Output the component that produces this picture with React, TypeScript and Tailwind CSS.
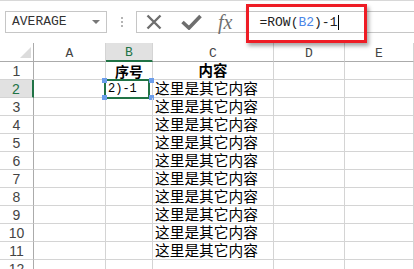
import React from "react";

const mono = { fontFamily: '"Liberation Mono", "DejaVu Sans Mono", monospace' };
const cjk = { fontFamily: '"Noto Sans CJK SC", "Noto Sans", sans-serif' };

const rows = Array.from({ length: 12 }, (_, i) => i + 1);

export default function App() {
  return (
    <div className="relative w-[414px] h-[269px] overflow-hidden bg-white">
      {/* Formula bar */}
      <div className="h-[43px] border-t border-[#d8d8d8] flex items-center pb-[1px]">
        <div className="ml-[5px] w-[102px] h-[22px] border border-[#c6c6c6] flex items-center justify-between pl-[6px] pr-[6px]">
          <span className="text-[13px] text-[#333] leading-none" style={mono}>
            AVERAGE
          </span>
          <span className="w-0 h-0 border-l-[4px] border-r-[4px] border-t-[4px] border-l-transparent border-r-transparent border-t-[#777]" />
        </div>
        <div className="ml-[14px] flex flex-col gap-[2px]">
          <span className="w-[2px] h-[2px] bg-[#b4b4b4]" />
          <span className="w-[2px] h-[2px] bg-[#b4b4b4]" />
          <span className="w-[2px] h-[2px] bg-[#b4b4b4]" />
        </div>
        <div className="ml-[13px] flex-1 h-[22px] border border-r-0 border-[#c6c6c6] flex items-center">
          <svg className="ml-[9px]" width="16" height="16" viewBox="0 0 16 16">
            <path d="M1.5 1.5 L14.5 14.5 M14.5 1.5 L1.5 14.5" stroke="#6e6e6e" strokeWidth="2.4" fill="none" />
          </svg>
          <svg className="ml-[19px]" width="21" height="16" viewBox="0 0 21 16">
            <path d="M1.5 8 L8 14 L19.5 2" stroke="#6e6e6e" strokeWidth="3.6" fill="none" strokeLinejoin="miter" />
          </svg>
          <span
            className="ml-[16px] text-[20px] italic text-[#707070] leading-none"
            style={{ fontFamily: '"Liberation Serif", "DejaVu Serif", serif' }}
          >
            fx
          </span>
          <span className="ml-[27px] mt-[2px] flex items-center text-[13px] text-[#222] leading-none" style={mono}>
            =ROW(<span className="text-[#4a86e8]">B2</span>)-1
            <span className="ml-[1px] w-px h-[15px] bg-black" />
          </span>
        </div>
      </div>

      {/* Annotation */}
      <div className="absolute left-[246px] top-[4px] w-[121px] h-[39px] border-[3px] border-[#ee1c25] shadow-[2px_3px_4px_rgba(0,0,0,0.35)]" />

      {/* Sheet */}
      <div className="grid grid-cols-[34px_72px_47px_121px_71px_1fr]">
        <div className="h-[19px] border-r border-b border-[#ababab] flex items-end justify-end pr-[2px] pb-[3px]">
          <svg width="11" height="11" viewBox="0 0 11 11">
            <polygon points="11,0 11,11 0,11" fill="#dcdcdc" />
          </svg>
        </div>
        {["A", "B", "C", "D", "E"].map((c) => (
          <div
            key={c}
            className={`h-[19px] flex items-center justify-center pt-[2px] text-[13px] leading-none ${
              c === "B"
                ? "bg-[#e1e1e1] text-[#217346] border-b-2 border-b-[#217346] border-r border-r-[#d4d4d4]"
                : "text-[#444] border-b border-b-[#ababab] border-r border-r-[#d4d4d4]"
            }`}
            style={mono}
          >
            {c}
          </div>
        ))}

        {rows.map((r) => (
          <React.Fragment key={r}>
            <div
              className={`h-[18px] flex items-center justify-center text-[14px] leading-none border-b border-[#d4d4d4] ${
                r === 2
                  ? "bg-[#e1e1e1] text-[#217346] border-r-2 border-r-[#217346]"
                  : "text-[#444] border-r border-r-[#ababab]"
              }`}
              style={{ fontFamily: '"Liberation Sans", Arial, sans-serif' }}
            >
              {r}
            </div>
            <div className="h-[18px] border-r border-b border-[#d4d4d4]" />
            <div className="relative h-[18px] border-r border-b border-[#d4d4d4] flex items-center">
              {r === 1 && (
                <span className="w-full text-center text-[14px] font-bold text-black leading-none" style={cjk}>
                  序号
                </span>
              )}
              {r === 2 && (
                <>
                  <span className="pl-[2px] text-[12px] text-black leading-none" style={mono}>
                    2)-1
                  </span>
                  <div className="absolute left-[-2px] top-[-1px] w-[46px] h-[20px] border-2 border-[#217346]" />
                  <span className="absolute left-[-4px] top-[-2px] w-[5px] h-[5px] bg-[#6d9eeb]" />
                  <span className="absolute left-[43px] top-[-2px] w-[5px] h-[5px] bg-[#6d9eeb]" />
                  <span className="absolute left-[-4px] top-[15px] w-[5px] h-[5px] bg-[#6d9eeb]" />
                  <span className="absolute left-[43px] top-[15px] w-[5px] h-[5px] bg-[#6d9eeb]" />
                </>
              )}
            </div>
            <div className="h-[18px] border-r border-b border-[#d4d4d4] flex items-center">
              {r === 1 && (
                <span className="w-full text-center text-[14.5px] font-bold text-black leading-none" style={cjk}>
                  内容
                </span>
              )}
              {r >= 2 && r <= 11 && (
                <span className="pl-[2px] text-[14.7px] text-black leading-none whitespace-nowrap" style={cjk}>
                  这里是其它内容
                </span>
              )}
            </div>
            <div className="h-[18px] border-r border-b border-[#d4d4d4]" />
            <div className="h-[18px] border-r border-b border-[#d4d4d4]" />
          </React.Fragment>
        ))}
      </div>
    </div>
  );
}
